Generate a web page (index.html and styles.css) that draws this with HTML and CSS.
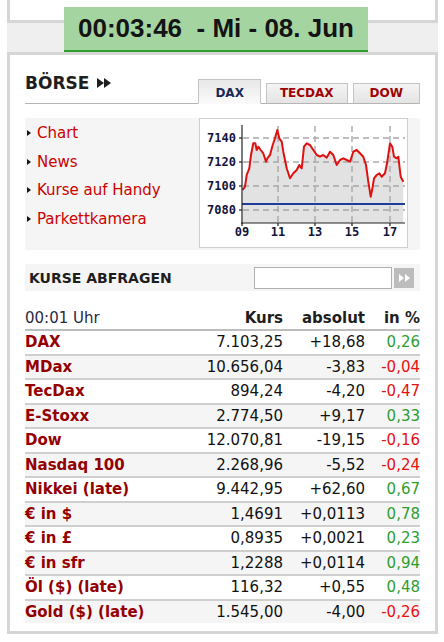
FILE: index.html
```html
<!DOCTYPE html>
<html lang="de">
<head>
<meta charset="utf-8">
<title>Börse</title>
<link rel="stylesheet" href="styles.css">
</head>
<body>
<div class="page">
  <div class="topbox"></div>
  <div class="band"></div>
  <div class="clock">00:03:46&nbsp; - Mi - 08. Jun</div>

  <div class="panel">
    <div class="head">
      <div class="title">BÖRSE <span class="dbl"><i></i><i></i></span></div>
      <div class="tabs">
        <span class="tab active">DAX</span>
        <span class="tab">TECDAX</span>
        <span class="tab">DOW</span>
      </div>
    </div>

    <div class="overview">
      <ul class="links">
        <li>Chart</li>
        <li>News</li>
        <li>Kurse auf Handy</li>
        <li>Parkettkamera</li>
      </ul>
      <div class="chart">
        <svg width="207" height="128" viewBox="200 119 207 128" xmlns="http://www.w3.org/2000/svg">
          <polygon fill="#e2e2e2" points="242.7,190 245,186.7 246.7,175 249.3,168.3 251,155 253.3,143.3 255.3,143.3 256.7,150 258.3,146.7 260.7,150 263.3,153.3 266,161.7 267.3,158.3 270,155 272.7,145 275,138.3 277.3,130 279.3,138.3 281.7,141.7 283.3,151.7 286.7,168.3 290,178.3 293.3,173.3 296.7,170 299.3,165 301.7,168.3 304,146.7 306.7,143.3 310,145 313.3,150 316.7,155 320,156.7 323.3,155 326.7,157.7 330,151.7 333.3,155 336.7,165 340,160 343.3,158.3 346.7,160 350,161.7 353.3,151.7 356.7,150 360,153.3 363.3,156.7 366,165 368.3,181.7 370.7,196.7 372.7,186.7 374,178.3 376.7,175 379.3,173.3 381.7,176.7 385,173.3 387.3,161.7 390,143.3 392.3,146.7 394,156.7 396.7,158.3 398.3,156.7 400.7,176.7 403.3,181.7 403.3,223 242.7,223"/>
          <g stroke="#a8a8a8" stroke-width="1.4" stroke-dasharray="6,4" fill="none">
            <line x1="243" y1="138" x2="405" y2="138"/>
            <line x1="243" y1="162" x2="405" y2="162"/>
            <line x1="243" y1="186" x2="405" y2="186"/>
            <line x1="243" y1="210" x2="405" y2="210"/>
            <line x1="278" y1="126" x2="278" y2="222"/>
            <line x1="315" y1="126" x2="315" y2="222"/>
            <line x1="352" y1="126" x2="352" y2="222"/>
            <line x1="390" y1="126" x2="390" y2="222"/>
          </g>
          <line x1="242" y1="204" x2="405" y2="204" stroke="#1f3c96" stroke-width="2"/>
          <polyline fill="none" stroke="#e01010" stroke-width="2" stroke-linejoin="round" points="242.7,190 245,186.7 246.7,175 249.3,168.3 251,155 253.3,143.3 255.3,143.3 256.7,150 258.3,146.7 260.7,150 263.3,153.3 266,161.7 267.3,158.3 270,155 272.7,145 275,138.3 277.3,130 279.3,138.3 281.7,141.7 283.3,151.7 286.7,168.3 290,178.3 293.3,173.3 296.7,170 299.3,165 301.7,168.3 304,146.7 306.7,143.3 310,145 313.3,150 316.7,155 320,156.7 323.3,155 326.7,157.7 330,151.7 333.3,155 336.7,165 340,160 343.3,158.3 346.7,160 350,161.7 353.3,151.7 356.7,150 360,153.3 363.3,156.7 366,165 368.3,181.7 370.7,196.7 372.7,186.7 374,178.3 376.7,175 379.3,173.3 381.7,176.7 385,173.3 387.3,161.7 390,143.3 392.3,146.7 394,156.7 396.7,158.3 398.3,156.7 400.7,176.7 403.3,181.7"/>
          <g stroke="#222" stroke-width="1.2" fill="none">
            <line x1="242" y1="125" x2="242" y2="224"/>
            <line x1="241" y1="223" x2="405" y2="223"/>
            <line x1="239" y1="138" x2="242" y2="138"/>
            <line x1="239" y1="162" x2="242" y2="162"/>
            <line x1="239" y1="186" x2="242" y2="186"/>
            <line x1="239" y1="210" x2="242" y2="210"/>
            <line x1="242" y1="223" x2="242" y2="226"/>
            <line x1="278" y1="223" x2="278" y2="226"/>
            <line x1="315" y1="223" x2="315" y2="226"/>
            <line x1="352" y1="223" x2="352" y2="226"/>
            <line x1="390" y1="223" x2="390" y2="226"/>
          </g>
          <g class="axis" text-anchor="end">
            <text x="236" y="142">7140</text>
            <text x="236" y="166">7120</text>
            <text x="236" y="190">7100</text>
            <text x="236" y="214">7080</text>
          </g>
          <g class="axis" text-anchor="middle">
            <text x="242" y="236">09</text>
            <text x="278" y="236">11</text>
            <text x="315" y="236">13</text>
            <text x="352" y="236">15</text>
            <text x="390" y="236">17</text>
          </g>
        </svg>
      </div>
    </div>

    <div class="query">
      <span class="qlabel">KURSE ABFRAGEN</span>
      <span class="qinput"></span>
      <span class="qbtn"><i></i><i></i></span>
    </div>

    <div class="quotes">
      <div class="row hdr"><span class="time">00:01 Uhr</span><span>Kurs</span><span>absolut</span><span>in %</span></div>
      <div class="row"><span class="n">DAX</span><span>7.103,25</span><span>+18,68</span><span class="up">0,26</span></div>
      <div class="row alt"><span class="n">MDax</span><span>10.656,04</span><span>-3,83</span><span class="dn">-0,04</span></div>
      <div class="row"><span class="n">TecDax</span><span>894,24</span><span>-4,20</span><span class="dn">-0,47</span></div>
      <div class="row alt"><span class="n">E-Stoxx</span><span>2.774,50</span><span>+9,17</span><span class="up">0,33</span></div>
      <div class="row"><span class="n">Dow</span><span>12.070,81</span><span>-19,15</span><span class="dn">-0,16</span></div>
      <div class="row alt"><span class="n">Nasdaq 100</span><span>2.268,96</span><span>-5,52</span><span class="dn">-0,24</span></div>
      <div class="row"><span class="n">Nikkei (late)</span><span>9.442,95</span><span>+62,60</span><span class="up">0,67</span></div>
      <div class="row alt"><span class="n">€ in $</span><span>1,4691</span><span>+0,0113</span><span class="up">0,78</span></div>
      <div class="row"><span class="n">€ in £</span><span>0,8935</span><span>+0,0021</span><span class="up">0,23</span></div>
      <div class="row alt"><span class="n">€ in sfr</span><span>1,2288</span><span>+0,0114</span><span class="up">0,94</span></div>
      <div class="row"><span class="n">Öl ($) (late)</span><span>116,32</span><span>+0,55</span><span class="up">0,48</span></div>
      <div class="row alt last"><span class="n">Gold ($) (late)</span><span>1.545,00</span><span>-4,00</span><span class="dn">-0,26</span></div>
    </div>
  </div>
</div>
</body>
</html>
```
FILE: styles.css
```css
html, body {
  margin: 0;
  padding: 0;
  background: #fff;
  font-family: "DejaVu Sans", Verdana, sans-serif;
  color: #111;
}

.page {
  position: relative;
  width: 444px;
  height: 642px;
}

.topbox {
  height: 20px;
  margin: 0 6px 0 7px;
  background: #fff;
  border: 3px solid #d6d6d6;
  border-top: 0;
}

.band {
  height: 29px;
  margin: 0 6px 0 7px;
  background: #efefef;
}

.clock {
  position: absolute;
  left: 64px;
  top: 7px;
  width: 304px;
  height: 43px;
  background: #a4d5a1;
  border-bottom: 2px solid #2f9e2f;
  font-family: "Liberation Sans", Arial, sans-serif;
  font-weight: bold;
  font-size: 26px;
  line-height: 43px;
  text-align: center;
  color: #141414;
  white-space: nowrap;
}

.panel {
  margin: 0 6px 0 7px;
  border: 3px solid #d6d6d6;
  background: #fff;
  padding: 17px 15px 8px;
}

/* heading + tabs */
.head {
  display: flex;
  align-items: flex-end;
  height: 32px;
}

.title {
  flex: 1;
  align-self: stretch;
  display: flex;
  align-items: flex-start;
  gap: 8px;
  font-weight: bold;
  font-size: 17px;
  line-height: 22px;
  color: #1e1e1e;
  border-bottom: 1px solid #b4b4b4;
}

.dbl {
  display: inline-flex;
  align-items: center;
  height: 22px;
}

.dbl i {
  width: 0;
  height: 0;
  border-top: 5px solid transparent;
  border-bottom: 5px solid transparent;
  border-left: 7px solid #1e1e1e;
}

.tabs {
  display: flex;
  align-items: flex-end;
  gap: 5px;
  height: 24px;
  border-bottom: 1px solid #b4b4b4;
}

.tab {
  display: block;
  box-sizing: border-box;
  height: 21px;
  padding: 0 14px;
  border: 1px solid #c4c4c4;
  background: linear-gradient(#f4f4f4, #e4e4e4);
  font-size: 12px;
  font-weight: bold;
  line-height: 19px;
  color: #a00000;
  margin-bottom: -1px;
  border-bottom-color: #b4b4b4;
}

.tab:nth-child(2) { padding: 0 13px; }
.tab:nth-child(3) { padding: 0 16px; }

.tab.active {
  height: 25px;
  padding: 4px 16px 0;
  color: #1a2858;
  background: linear-gradient(#e8e8e8, #fafafa);
  border-bottom: 1px solid #fafafa;
}

/* overview: links + chart */
.overview {
  display: flex;
  margin-top: 14px;
  height: 132px;
  background: #f5f5f5;
}

.links {
  list-style: none;
  margin: 0;
  padding: 1px 0 0 2px;
  width: 172px;
}

.links li {
  display: flex;
  align-items: center;
  gap: 6px;
  height: 28.6px;
  font-size: 15px;
  color: #cc0000;
}

.links li::before {
  content: "";
  width: 0;
  height: 0;
  border-top: 3.5px solid transparent;
  border-bottom: 3.5px solid transparent;
  border-left: 4px solid #111;
}

.chart {
  width: 207px;
  height: 128px;
  border: 1px solid #cfcfcf;
  background: #fff;
}

.chart svg {
  display: block;
}

.axis text {
  font-family: "DejaVu Sans Mono", monospace;
  font-weight: bold;
  font-size: 12px;
  fill: #14143c;
}

/* query bar */
.query {
  display: flex;
  align-items: center;
  margin-top: 14px;
  height: 27px;
  background: #f5f5f5;
  padding: 0 6px 0 4px;
}

.qlabel {
  flex: 1;
  font-size: 14px;
  font-weight: bold;
  color: #1e1e1e;
}

.qinput {
  box-sizing: border-box;
  width: 138px;
  height: 22px;
  border: 1px solid #b0b0b0;
  background: #fff;
  margin-right: 2px;
}

.qbtn {
  display: flex;
  align-items: center;
  justify-content: center;
  gap: 1px;
  width: 20px;
  height: 20px;
  background: #bcbcbc;
}

.qbtn i {
  width: 0;
  height: 0;
  border-top: 4px solid transparent;
  border-bottom: 4px solid transparent;
  border-left: 5px solid #fff;
}

/* quotes table */
.quotes {
  margin-top: 15px;
}

.row {
  display: grid;
  grid-template-columns: 1fr 100px 82px 55px;
  align-items: center;
  height: 22.5px;
  border-bottom: 2px solid #cfcfcf;
  font-size: 15px;
}

.row > span {
  text-align: right;
  white-space: nowrap;
}

.row > span:first-child {
  text-align: left;
}

.row.alt {
  background: #f5f5f5;
}

.row.last {
  border-bottom: 0;
}

.row.hdr {
  height: 23px;
  border-bottom: 2px solid #bdbdbd;
  font-weight: bold;
  color: #1e1e1e;
}

.row.hdr .time {
  font-weight: normal;
  color: #2a2a44;
}

.n {
  font-weight: bold;
  color: #940000;
}

.up { color: #2e9e2e; }
.dn { color: #e81010; }
```
